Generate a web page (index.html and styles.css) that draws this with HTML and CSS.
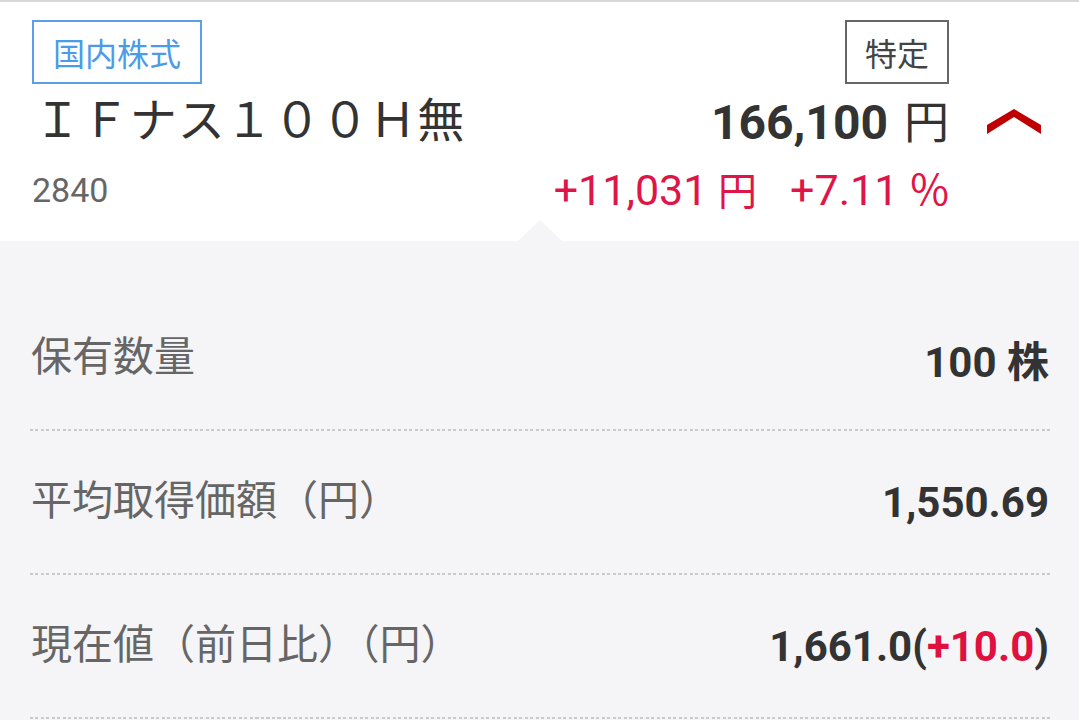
FILE: index.html
```html
<!DOCTYPE html>
<html lang="ja">
<head>
<meta charset="utf-8">
<title>保有銘柄</title>
<link rel="stylesheet" href="styles.css">
</head>
<body>
<section class="summary">
  <div class="tag tag-market">国内株式</div>
  <div class="tag tag-account">特定</div>
  <div class="spacer"></div>

  <div class="name">ＩＦナス１００Ｈ無</div>
  <div class="price"><span class="num">166,100</span><span class="unit">円</span></div>
  <div class="chevron">
    <svg width="54" height="26" viewBox="0 0 54 26"><polygon points="0,16 27,0 54,16 54,25 27,8 0,25" fill="#bf0000"/></svg>
  </div>

  <div class="code">2840</div>
  <div class="change"><span>+11,031 <span class="yen">円</span></span><span>+7.11<span class="pct">%</span></span></div>
  <div class="spacer"></div>
</section>

<section class="details">
  <div class="row">
    <span class="label">保有数量</span>
    <span class="value">100 株</span>
  </div>
  <div class="row">
    <span class="label">平均取得価額（円）</span>
    <span class="value">1,550.69</span>
  </div>
  <div class="row">
    <span class="label">現在値（前日比）（円）</span>
    <span class="value">1,661.0(<span class="up">+10.0</span>)</span>
  </div>
</section>
</body>
</html>
```
FILE: styles.css
```css
* { box-sizing: border-box; }

html, body {
  margin: 0;
  padding: 0;
}

body {
  background: #f5f5f7;
  font-family: Roboto, "Noto Sans CJK JP", sans-serif;
  color: #333;
  width: 1079px;
  height: 720px;
  overflow: hidden;
}

.summary {
  background: #fff;
  border-top: 2px solid #d8d8d8;
  height: 241px;
  padding: 18px 38px 0 32px;
  display: grid;
  grid-template-columns: 1fr auto 54px;
  grid-template-rows: 64px 70px 64px;
  column-gap: 38px;
  align-items: center;
}

.tag {
  font-family: "Noto Sans CJK JP", sans-serif;
  font-size: 32px;
  line-height: 60px;
  padding: 0 19px;
  border: 2px solid;
  justify-self: start;
  white-space: nowrap;
}

.tag-market {
  color: #4b9be8;
  border-color: #5aa0e8;
}

.tag-account {
  color: #444;
  border-color: #666;
  justify-self: end;
  padding: 0 18px;
}

.name {
  font-family: "Noto Sans CJK JP", sans-serif;
  font-size: 47px;
  letter-spacing: 0.9px;
  line-height: 56px;
  color: #333;
  margin-left: 2px;
  margin-top: -4px;
  white-space: nowrap;
}

.price {
  justify-self: end;
  display: flex;
  align-items: baseline;
  white-space: nowrap;
  color: #333;
}

.price .num {
  font-weight: 700;
  font-size: 48px;
}

.price .unit {
  font-family: "Noto Sans CJK JP", sans-serif;
  font-size: 45px;
  font-weight: 400;
  margin-left: 16px;
}

.chevron {
  display: flex;
  align-items: center;
  height: 26px;
  margin-top: 6px;
}

.chevron svg { display: block; }

.code {
  font-size: 34px;
  color: #666;
  margin-top: 8px;
}

.change {
  justify-self: end;
  display: flex;
  align-items: baseline;
  gap: 33px;
  color: #df1447;
  font-size: 43px;
  white-space: nowrap;
}

.change .yen {
  font-family: "Noto Sans CJK JP", sans-serif;
  font-size: 39px;
}

.change .pct {
  font-family: "Noto Sans CJK JP", sans-serif;
  font-size: 42px;
  margin-left: 12px;
}

.details {
  position: relative;
  padding: 46px 29px 0 30px;
}

.details::before {
  content: "";
  position: absolute;
  top: -21px;
  left: 518px;
  border-left: 22px solid transparent;
  border-right: 22px solid transparent;
  border-bottom: 21px solid #f5f5f7;
}

.row {
  height: 144px;
  padding: 0 1px 2px 1px;
  display: flex;
  align-items: center;
  justify-content: space-between;
  background: repeating-linear-gradient(90deg, #cacaca 0 3px, transparent 3px 5.5px) left bottom / 100% 2px no-repeat;
}

.label {
  font-family: "Noto Sans CJK JP", sans-serif;
  font-size: 41px;
  color: #666;
  margin-bottom: 10px;
}

.value {
  font-weight: 700;
  font-size: 42px;
  color: #333;
}

.up { color: #e0103f; }
```
